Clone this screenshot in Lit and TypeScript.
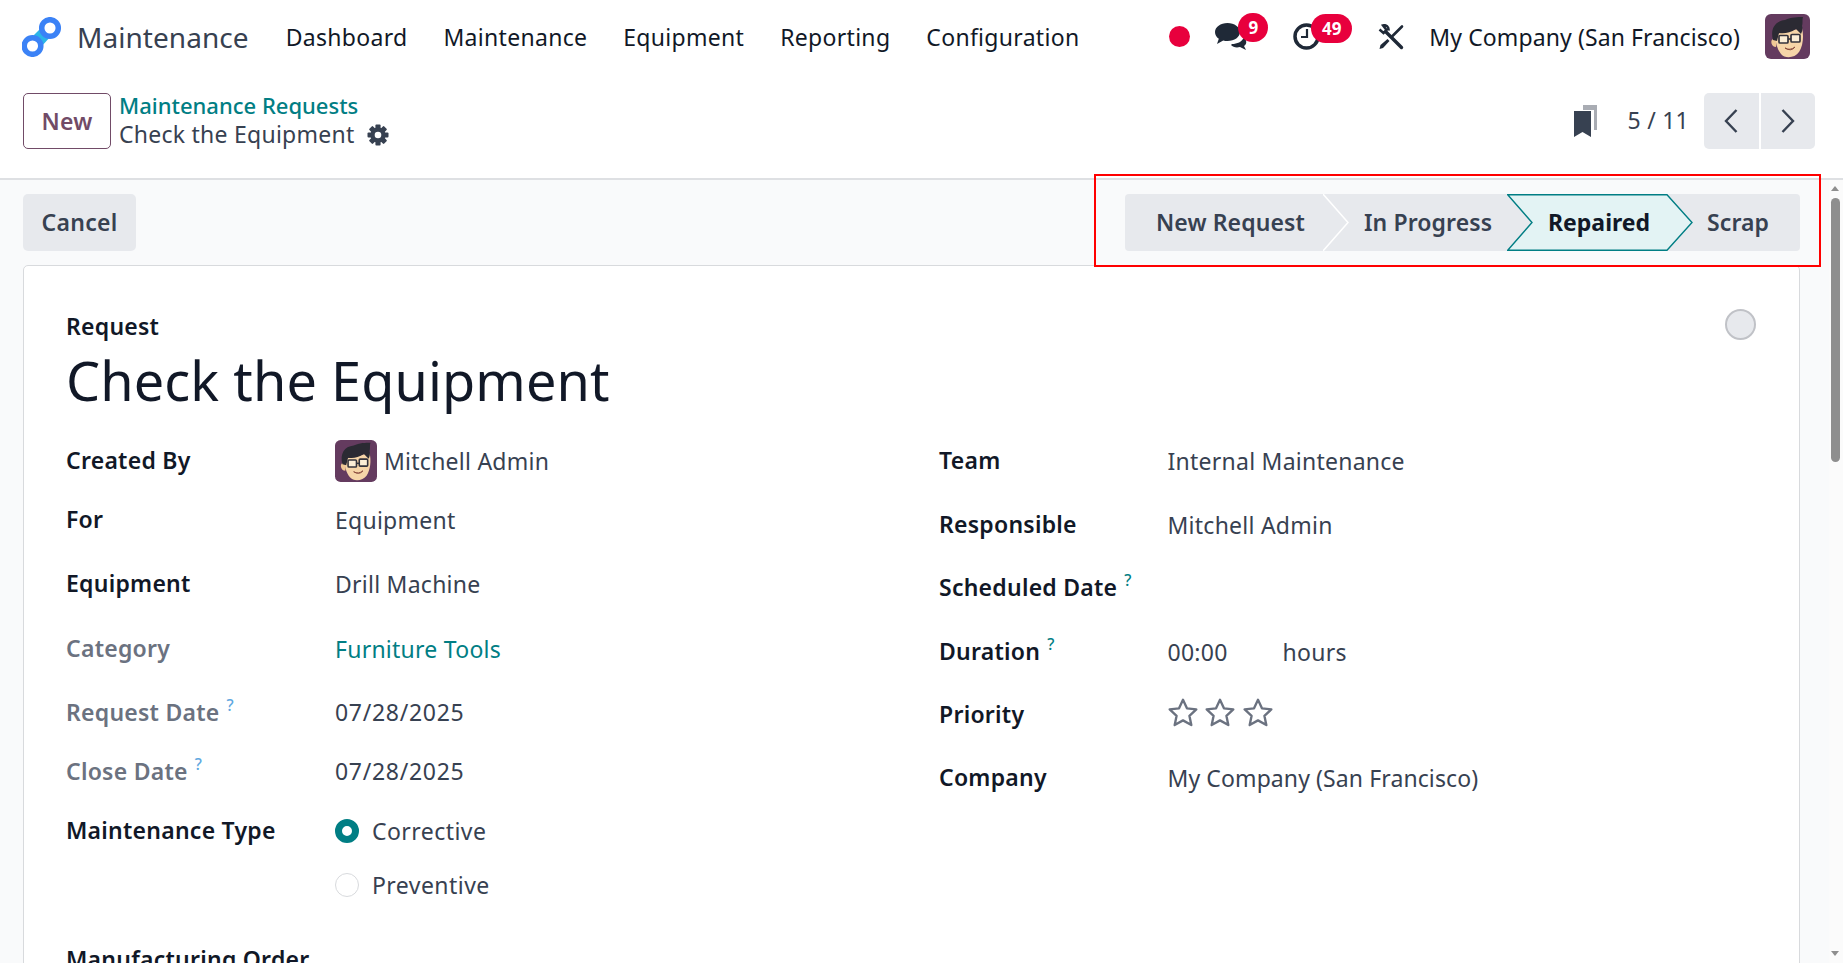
import { LitElement, css, html, svg } from 'lit'
import { customElement } from 'lit/decorators.js'

const avatar = (size: number) => html`
  <svg class="avatar" width=${size} height=${size} viewBox="0 0 45 45">
    <rect width="45" height="45" rx="6" fill="#643b5f" />
    <path d="M8 25c-3 1-2 8 3 8l1-8z" fill="#efc795" />
    <path
      d="M11 20l26-6c2 8 1 18-3 24-4 6-14 7-18 2-4-5-6-12-5-20z"
      fill="#f6d5a8"
    />
    <path
      d="M8 26C5 15 10 7 20 6c6-3 13-3 18-3-1 3 0 5-1 9 1 3 0 6-1 8l-5-5c-6 4-12 5-17 4l-2 8z"
      fill="#2b2a33"
    />
    <g fill="#fbeed6" stroke="#34333c" stroke-width="1.7">
      <rect x="14" y="21.5" width="9" height="7.5" rx="1" />
      <rect x="26" y="20.5" width="9" height="7.5" rx="1" />
    </g>
    <path d="M23 25h3" stroke="#34333c" stroke-width="1.6" />
    <path d="M20 34q5 3 10-1-4 5-10 1z" fill="#fff" stroke="#8a4b3c" stroke-width="1" />
  </svg>
`

const star = (key: number) => html`
  <svg class="star" data-key=${key} width="32" height="31" viewBox="0 0 30 29">
    <path
      d="M15 2.5l3.7 8.1 8.8 1-6.5 6 1.8 8.7L15 21.9l-7.8 4.4L9 17.6l-6.5-6 8.8-1z"
      fill="none"
      stroke="#6b7280"
      stroke-width="2.2"
      stroke-linejoin="round"
    />
  </svg>
`

const gear = html`
  <svg width="22" height="22" viewBox="0 0 22 22">
    ${[0, 45, 90, 135, 180, 225, 270, 315].map(
      (angle) =>
        svg`<rect x="8.4" y="0.5" width="5.2" height="6" rx="1" fill="#374151" transform="rotate(${angle} 11 11)" />`,
    )}
    <circle cx="11" cy="11" r="7.6" fill="#374151" />
    <circle cx="11" cy="11" r="3.3" fill="#fff" />
  </svg>
`

interface FormRow {
  label: string
  value?: string
  muted?: boolean
  hint?: 'blue' | 'teal'
  link?: boolean
  date?: boolean
}

const leftRows: FormRow[] = [
  { label: 'For', value: 'Equipment' },
  { label: 'Equipment', value: 'Drill Machine' },
  { label: 'Category', value: 'Furniture Tools', muted: true, link: true },
  { label: 'Request Date', value: '07/28/2025', muted: true, hint: 'blue', date: true },
  { label: 'Close Date', value: '07/28/2025', muted: true, hint: 'blue', date: true },
]

@customElement('app-root')
export class AppRoot extends LitElement {
  static styles = css`
    :host {
      display: flex;
      flex-direction: column;
      width: 1843px;
      height: 963px;
      overflow: hidden;
      background: #fff;
      color: #374151;
      font-family: 'Noto Sans', sans-serif;
      font-size: 23px;
      letter-spacing: 0.25px;
    }

    svg {
      display: block;
      flex: none;
    }

    .nav {
      display: flex;
      align-items: center;
      flex: none;
      height: 75px;
      box-sizing: border-box;
      padding: 0 0 2px 22px;
    }

    .brand {
      margin-left: 15px;
      font-size: 28px;
      letter-spacing: 0.05px;
    }

    .menu {
      display: flex;
      gap: 36px;
      margin-left: 37px;
      color: #111827;
      letter-spacing: 0.3px;
    }

    .systray {
      display: flex;
      align-items: center;
      margin-left: auto;
      padding-right: 33px;
      color: #111827;
    }

    .dot {
      width: 21px;
      height: 21px;
      border-radius: 50%;
      background: #e8003d;
    }

    .tray-icon {
      position: relative;
    }

    .badge {
      position: absolute;
      display: flex;
      align-items: center;
      justify-content: center;
      height: 29px;
      min-width: 30px;
      padding: 0 6px;
      box-sizing: border-box;
      border-radius: 15px;
      background: #e8003d;
      color: #fff;
      font-size: 17px;
      font-weight: 700;
      letter-spacing: 0;
    }

    .chat {
      margin-left: 25px;
    }

    .chat .badge {
      top: -10px;
      left: 23px;
    }

    .clock {
      margin-left: 45px;
    }

    .clock .badge {
      top: -9px;
      left: 18px;
      width: 41px;
    }

    .tools {
      margin-left: 58px;
    }

    .company {
      margin-left: 25px;
      letter-spacing: 0.1px;
    }

    .systray .avatar {
      margin-left: 25px;
    }

    .panel {
      display: flex;
      align-items: center;
      flex: none;
      height: 105px;
      box-sizing: border-box;
      padding: 0 28px 11px 23px;
      border-bottom: 2px solid #dee0e3;
    }

    .new {
      display: flex;
      align-items: center;
      justify-content: center;
      width: 88px;
      height: 56px;
      box-sizing: border-box;
      border: 1.5px solid #714b67;
      border-radius: 5px;
      color: #714b67;
      font-weight: 600;
    }

    .crumbs {
      margin: 0 0 2px 8px;
      line-height: 29px;
    }

    .crumb-link {
      color: #017e84;
      font-weight: 500;
      font-size: 22px;
      letter-spacing: 0;
    }

    .crumb-now {
      display: flex;
      align-items: center;
      gap: 13px;
    }

    .pager {
      display: flex;
      align-items: center;
      margin-left: auto;
    }

    .pager-text {
      margin: 0 15px 2px 31px;
    }

    .pager-buttons {
      display: flex;
      gap: 2px;
    }

    .pager-button {
      display: flex;
      align-items: center;
      justify-content: center;
      width: 54.5px;
      height: 56px;
      background: #e7e9ed;
    }

    .pager-button:first-child {
      border-radius: 5px 0 0 5px;
    }

    .pager-button:last-child {
      border-radius: 0 5px 5px 0;
    }

    .main {
      position: relative;
      display: flex;
      flex: 1;
      min-height: 0;
    }

    .content {
      flex: 1;
      min-width: 0;
      background: #f9fafb;
      padding: 14px 29px 0 23px;
    }

    .highlight {
      position: absolute;
      left: 1094px;
      top: -6px;
      width: 727px;
      height: 93px;
      box-sizing: border-box;
      border: 2px solid #f00;
      pointer-events: none;
    }

    .actions {
      display: flex;
      justify-content: space-between;
      height: 57px;
    }

    .cancel {
      display: flex;
      align-items: center;
      justify-content: center;
      width: 113px;
      box-sizing: border-box;
      padding-bottom: 2px;
      border-radius: 5px;
      background: #e7e9ed;
      font-weight: 600;
    }

    .status {
      display: flex;
      width: 675px;
      border-radius: 4px;
      background: #e7e9ed;
      font-weight: 600;
      letter-spacing: 0.1px;
    }

    .step {
      position: relative;
      display: flex;
      align-items: center;
      box-sizing: border-box;
      padding: 0 0 2px 41px;
    }

    .step span {
      position: relative;
    }

    .step svg {
      position: absolute;
      top: 0;
    }

    .step.first {
      width: 198px;
      padding-left: 31px;
    }

    .step.second {
      width: 184px;
    }

    .step.third {
      width: 160px;
      color: #111827;
      font-weight: 700;
      letter-spacing: 0;
    }

    .step.last {
      flex: 1;
      padding-left: 40px;
    }

    .card {
      position: relative;
      height: 720px;
      margin-top: 14px;
      box-sizing: border-box;
      padding: 44px 42px 0;
      border: 1px solid #d8dadd;
      border-radius: 5px;
      background: #fff;
    }

    .state {
      position: absolute;
      top: 43px;
      right: 43px;
      width: 31px;
      height: 31px;
      box-sizing: border-box;
      border: 2px solid #c0c2c7;
      border-radius: 50%;
      background: #e7e9ed;
    }

    .eyebrow {
      line-height: 32px;
      color: #111827;
      font-weight: 600;
    }

    h1 {
      margin: 3px 0 26px;
      line-height: 70px;
      color: #111827;
      font-weight: 400;
      font-size: 54px;
      letter-spacing: 0.1px;
    }

    .columns {
      display: flex;
    }

    .group {
      display: grid;
      align-items: start;
    }

    .group.left {
      width: 873px;
      grid-template-columns: 269px 1fr;
      grid-template-rows: 59px 64px 65px 64px 59px 59px 54px 75px 40px;
    }

    .group.right {
      flex: 1;
      grid-template-columns: 228.5px 1fr;
      grid-template-rows: 64px 63px 64px 63px 63px 40px;
    }

    .label {
      height: 40px;
      margin-top: -1.5px;
      line-height: 40px;
      color: #111827;
      font-weight: 600;
      white-space: nowrap;
    }

    .label.muted {
      color: #6b7280;
    }

    .value {
      display: flex;
      align-items: center;
      height: 40px;
      white-space: nowrap;
    }

    .value.link {
      color: #017e84;
    }

    .value.date {
      margin-top: -1px;
      letter-spacing: 0.7px;
    }

    .value.narrow {
      letter-spacing: 0.1px;
    }

    .hint {
      margin-left: 7px;
      line-height: 0;
      vertical-align: 10px;
      font-size: 16px;
      font-weight: 500;
    }

    .hint.blue {
      color: #5fa8e0;
    }

    .hint.teal {
      color: #017e84;
    }

    .person {
      gap: 7px;
    }

    .stars {
      gap: 5.5px;
      margin-top: -3px;
      margin-left: -1px;
    }

    .duration {
      gap: 55px;
    }

    .radio {
      gap: 13px;
      letter-spacing: 0.45px;
    }

    .radio i {
      display: block;
      width: 24px;
      height: 24px;
      box-sizing: border-box;
      border: 1.5px solid #d8dadd;
      border-radius: 50%;
      background: #fff;
    }

    .radio i.on {
      border: 7px solid #017e84;
    }

    .scrollbar {
      position: relative;
      flex: none;
      width: 14px;
      background: #fbfbfb;
    }

    .thumb {
      width: 9px;
      height: 264px;
      margin: 18px 0 0 2px;
      border-radius: 5px;
      background: #8e8e8e;
    }

    .arrow {
      position: absolute;
      left: 2px;
      width: 0;
      height: 0;
      border-left: 4.5px solid transparent;
      border-right: 4.5px solid transparent;
    }

    .arrow.up {
      top: 6px;
      border-bottom: 5px solid #8e8e8e;
    }

    .arrow.down {
      bottom: 7px;
      border-top: 5px solid #8e8e8e;
    }
  `

  private renderNav() {
    return html`
      <div class="nav">
        <svg width="40" height="40" viewBox="0 0 40 40">
          <path d="M22 8l9 9-14 15-10-9z" fill="#2bb5e8" />
          <circle cx="28" cy="11" r="8.3" fill="#fff" stroke="#3b82f6" stroke-width="5.5" />
          <circle cx="10.5" cy="29" r="8.3" fill="#fff" stroke="#3b82f6" stroke-width="5.5" />
        </svg>
        <div class="brand">Maintenance</div>
        <div class="menu">
          <span>Dashboard</span>
          <span>Maintenance</span>
          <span>Equipment</span>
          <span>Reporting</span>
          <span>Configuration</span>
        </div>
        <div class="systray">
          <div class="dot"></div>
          <div class="tray-icon chat">
            <svg width="33" height="27" viewBox="0 0 33 27">
              <path d="M17 21c5 0 10-2 12-7 3 4 3 7 0 9l2 4-6-3c-4 1-7 0-9-2z" fill="#1f2937" />
              <path
                d="M12.5 0C19.4 0 25 4 25 9s-5.600 9-12.500 9c-1.500 0-3-.2-4.300-.6L2 21l1.800-5.200C1.400 14.200 0 11.700 0 9c0-5 5.600-9 12.500-9z"
                fill="#1f2937"
              />
            </svg>
            <div class="badge">9</div>
          </div>
          <div class="tray-icon clock">
            <svg width="27" height="27" viewBox="0 0 27 27">
              <circle cx="13.500" cy="13.500" r="11.500" fill="none" stroke="#1f2937" stroke-width="3.500" />
              <path d="M14 6v8H8" fill="none" stroke="#1f2937" stroke-width="2.200" />
            </svg>
            <div class="badge">49</div>
          </div>
          <svg class="tools" width="26" height="26" viewBox="0 0 26 26">
            <path d="M8 8l15.500 15.500" stroke="#1f2937" stroke-width="3.400" stroke-linecap="round" />
            <path d="M1.500 5.500l4 3.500 3-3-3.500-4.500c3-1 6 1 5.500 5" fill="none" stroke="#1f2937" stroke-width="2.500" />
            <path d="M24 2.500L14 12.500" stroke="#1f2937" stroke-width="2.600" stroke-linecap="round" />
            <path d="M9.500 15l2 2-6.500 7-3.500 1 1-4z" fill="#1f2937" />
          </svg>
          <div class="company">My Company (San Francisco)</div>
          ${avatar(45)}
        </div>
      </div>
    `
  }

  private renderPanel() {
    return html`
      <div class="panel">
        <div class="new">New</div>
        <div class="crumbs">
          <div class="crumb-link">Maintenance Requests</div>
          <div class="crumb-now"><span>Check the Equipment</span>${gear}</div>
        </div>
        <div class="pager">
          <svg width="23" height="32" viewBox="0 0 23 32">
            <path d="M9 0h14v25h-3V5H9z" fill="#a9acb3" />
            <path d="M0 6h17v26l-8.500-5L0 32z" fill="#374151" />
          </svg>
          <div class="pager-text">5 / 11</div>
          <div class="pager-buttons">
            <div class="pager-button">
              <svg width="16" height="26" viewBox="0 0 16 26">
                <path d="M13.500 2L3 13l10.500 11" fill="none" stroke="#374151" stroke-width="2.400" />
              </svg>
            </div>
            <div class="pager-button">
              <svg width="16" height="26" viewBox="0 0 16 26">
                <path d="M2.500 2L13 13 2.500 24" fill="none" stroke="#374151" stroke-width="2.400" />
              </svg>
            </div>
          </div>
        </div>
      </div>
    `
  }

  private renderStatus() {
    return html`
      <div class="status">
        <div class="step first">
          <span>New Request</span>
          <svg style="left:198px" width="27" height="57" viewBox="0 0 27 57">
            <path d="M0 0l25 28.500L0 57" fill="none" stroke="#fff" stroke-width="1.500" />
          </svg>
        </div>
        <div class="step second"><span>In Progress</span></div>
        <div class="step third">
          <svg style="left:0" width="187" height="57" viewBox="0 0 187 57">
            <path
              d="M.700.700H160L185 28.500 160 56.300H.700L25 28.500z"
              fill="#e3f3f4"
              stroke="#017e84"
              stroke-width="1.400"
            />
          </svg>
          <span>Repaired</span>
        </div>
        <div class="step last"><span>Scrap</span></div>
      </div>
    `
  }

  private renderLeftGroup() {
    return html`
      <div class="group left">
        <div class="label">Created By</div>
        <div class="value person">${avatar(42)}<span>Mitchell Admin</span></div>
        ${leftRows.map(
          (row) => html`
            <div class="label ${row.muted ? 'muted' : ''}">
              ${row.label}${row.hint
                ? html`<span class="hint ${row.hint}">?</span>`
                : ''}
            </div>
            <div class="value ${row.link ? 'link' : ''} ${row.date ? 'date' : ''}">
              ${row.value}
            </div>
          `,
        )}
        <div class="label">Maintenance Type</div>
        <div class="value radio"><i class="on"></i><span>Corrective</span></div>
        <div></div>
        <div class="value radio"><i></i><span>Preventive</span></div>
        <div class="label">Manufacturing Order</div>
        <div></div>
      </div>
    `
  }

  private renderRightGroup() {
    return html`
      <div class="group right">
        <div class="label">Team</div>
        <div class="value">Internal Maintenance</div>
        <div class="label">Responsible</div>
        <div class="value">Mitchell Admin</div>
        <div class="label">Scheduled Date<span class="hint teal">?</span></div>
        <div class="value"></div>
        <div class="label">Duration<span class="hint teal">?</span></div>
        <div class="value duration"><span>00:00</span><span>hours</span></div>
        <div class="label">Priority</div>
        <div class="value stars">${[0, 1, 2].map((n) => star(n))}</div>
        <div class="label">Company</div>
        <div class="value narrow">My Company (San Francisco)</div>
      </div>
    `
  }

  render() {
    return html`
      ${this.renderNav()} ${this.renderPanel()}
      <div class="main">
        <div class="content">
          <div class="actions">
            <div class="cancel">Cancel</div>
            ${this.renderStatus()}
          </div>
          <div class="card">
            <div class="state"></div>
            <div class="eyebrow">Request</div>
            <h1>Check the Equipment</h1>
            <div class="columns">
              ${this.renderLeftGroup()} ${this.renderRightGroup()}
            </div>
          </div>
        </div>
        <div class="scrollbar">
          <div class="arrow up"></div>
          <div class="thumb"></div>
          <div class="arrow down"></div>
        </div>
        <div class="highlight"></div>
      </div>
    `
  }
}
